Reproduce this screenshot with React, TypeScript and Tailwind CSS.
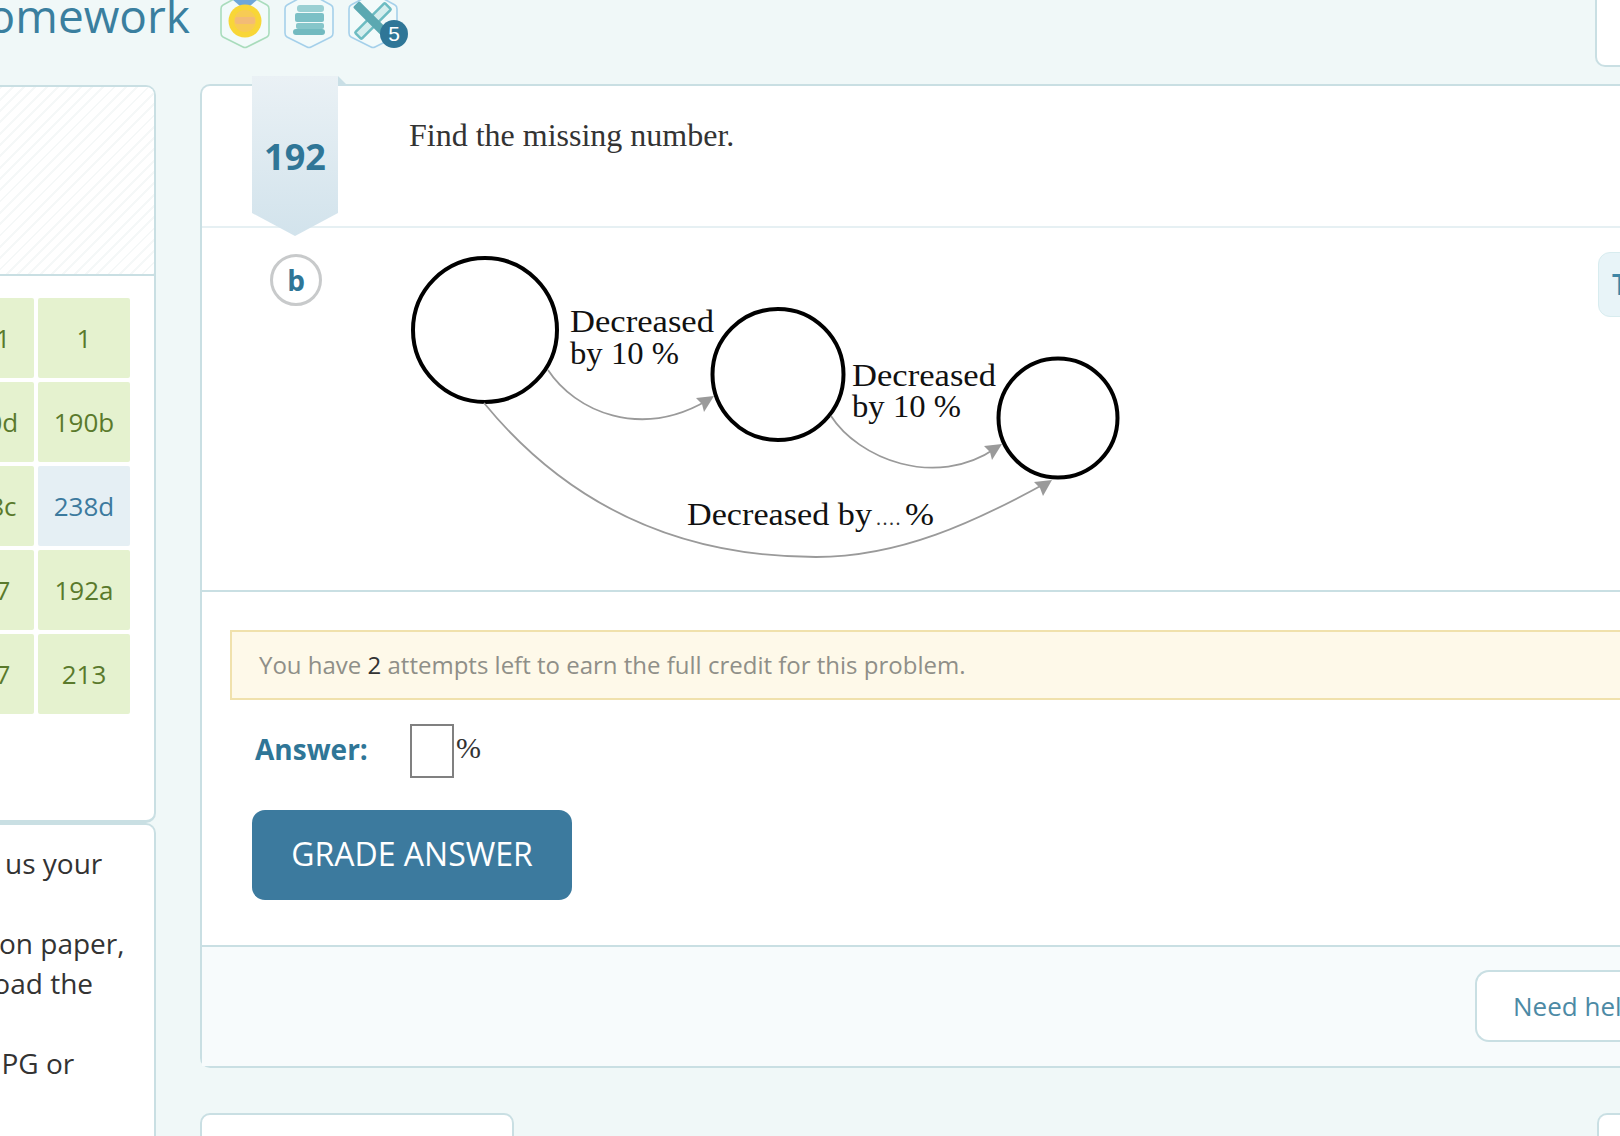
import React from "react";

const Hex = ({ stroke, children }: { stroke: string; children?: React.ReactNode }) => (
  <svg width="50" height="48" viewBox="0 0 50 48" className="overflow-visible shrink-0">
    <path d="M25 -7 L47 5 Q49 6 49 9 L49 33 Q49 36 47 37 L27 47 Q25 48 23 47 L3 37 Q1 36 1 33 L1 9 Q1 6 3 5 Z" fill="#f2fafa" stroke={stroke} strokeWidth="1.6" />
    {children}
  </svg>
);

const Row = ({ a, b, blue }: { a: string; b: string; blue?: boolean }) => (
  <>
    <div className="h-[80px] rounded-[2px] bg-[#e5f2cf] text-[#5a7a2c] flex items-center justify-center">{a}</div>
    <div className={blue ? "h-[80px] rounded-[2px] bg-[#e5eff4] text-[#3c7a9e] flex items-center justify-center" : "h-[80px] rounded-[2px] bg-[#e5f2cf] text-[#5a7a2c] flex items-center justify-center"}>{b}</div>
  </>
);

const Label = ({ x, y, w, children, size = 31 }: { x: number; y: number; w: number; children: string; size?: number }) => (
  <text x={x} y={y} textLength={w} lengthAdjust="spacingAndGlyphs" fontSize={size} fill="#111" fontFamily="'Liberation Serif', serif">{children}</text>
);

export default function App() {
  return (
    <div className="w-[1620px] h-[1136px] overflow-hidden bg-[#f0f8f8] font-['Open_Sans',sans-serif] flex flex-col">
      <header className="h-[85px] shrink-0 flex items-start">
        <div className="w-[190px] h-[85px] overflow-hidden flex justify-end shrink-0">
          <span className="-mt-[8px] text-[46px] leading-[46px] text-[#3a7f9f] whitespace-nowrap">Homework</span>
        </div>
        <div className="ml-[30px] flex gap-[14px]">
          <Hex stroke="#a9dcbc">
            <path d="M6 -6 L20 6 L30 6 L44 -6 Z" fill="#6ea7d8" />
            <circle cx="25" cy="21" r="16.5" fill="#f8d637" />
            <circle cx="25" cy="21" r="11" fill="#f7cb55" />
            <rect x="15" y="17" width="20" height="7" rx="2" fill="#f3bb76" />
          </Hex>
          <Hex stroke="#a5d0ea">
            <rect x="13" y="5" width="27" height="7" rx="3" fill="#9ad0d3" />
            <rect x="11" y="13" width="29" height="9" rx="2" fill="#7cc0c6" />
            <rect x="12" y="23" width="28" height="6" rx="2" fill="#86c6ca" />
            <rect x="9" y="29" width="32" height="6" rx="3" fill="#72bac0" />
          </Hex>
          <div className="relative w-[50px] h-[48px] shrink-0">
            <Hex stroke="#a5d0ea">
              <g transform="rotate(45 25 21)">
                <rect x="20.5" y="0" width="9" height="42" rx="1" fill="#d5eeee" stroke="#6dbcc2" strokeWidth="2.5" />
              </g>
              <g transform="rotate(-45 25 21)">
                <rect x="20.5" y="-3" width="9" height="44" rx="1.5" fill="#5ba8b1" />
              </g>
            </Hex>
            <span className="absolute left-[32px] top-[20px] w-[28px] h-[28px] rounded-full bg-[#2f7697] text-white text-[21px] leading-[28px] text-center font-['Liberation_Sans',sans-serif]">5</span>
          </div>
        </div>
        <div className="ml-auto w-[25px] h-[67px] bg-white border-l-2 border-b-2 border-[#c9dfe3] rounded-bl-[10px]" />
      </header>

      <div className="flex gap-[44px] items-start">
        <aside className="w-[156px] shrink-0 flex flex-col">
          <section className="h-[738px] bg-white border-t-2 border-r-2 border-b-[3px] border-[#c9dfe3] rounded-r-[10px] overflow-hidden">
            <div className="h-[189px] border-b-2 border-[#c9dfe3] bg-[repeating-linear-gradient(135deg,#f5f8f8_0px,#f5f8f8_2px,#ffffff_2px,#ffffff_8px)]" />
            <div className="-ml-[58px] mt-[22px] grid grid-cols-[92px_92px] gap-[4px] text-[26px]">
              <Row a="131" b="1" />
              <Row a="190d" b="190b" />
              <Row a="238c" b="238d" blue />
              <Row a="127" b="192a" />
              <Row a="127" b="213" />
            </div>
          </section>
          <section className="h-[340px] bg-white border-t-2 border-r-2 border-[#c9dfe3] rounded-tr-[10px] pt-[18px] text-[28px] leading-[40px] text-[#333] whitespace-nowrap overflow-hidden">
            <div className="ml-[5px]">us your</div>
            <div className="h-[40px]" />
            <div className="-ml-[1px]">on paper,</div>
            <div className="-ml-[48px]">upload the</div>
            <div className="h-[40px]" />
            <div className="-ml-[6px]">JPG or</div>
          </section>
        </aside>

        <main className="w-[1461px] shrink-0 -mt-[1px]">
          <div className="relative bg-white border-2 border-r-0 border-[#c9dfe3] rounded-l-[10px]">
            <div className="absolute left-[50px] -top-[10px] w-[86px] h-[160px] [clip-path:polygon(0_0,100%_0,100%_137px,50%_100%,0_137px)] bg-[linear-gradient(180deg,#eaf1f5,#d2e3ec)] flex items-center justify-center pt-[1px]">
              <span className="text-[36px] font-bold text-[#2f7697] leading-none">192</span>
            </div>
            <svg className="absolute left-[136px] -top-[10px]" width="11" height="11" viewBox="0 0 11 11">
              <path d="M0 0 L10 10 L0 10 Z" fill="#c9dfe6" />
            </svg>

            <div className="h-[142px] border-b-2 border-[#e6f0f3] pl-[207px] pt-[29px] font-['Liberation_Serif',serif] text-[32px] leading-[40px] text-[#333]">
              Find the missing number.
            </div>

            <div className="flex items-start pl-[68px] border-b-2 border-[#c9dfe3] h-[364px]">
              <div className="mt-[26px] w-[52px] h-[52px] rounded-full border-[3px] border-[#c8cacb] bg-white flex items-center justify-center text-[28px] font-bold text-[#2f7697] leading-none shrink-0">b</div>
              <svg className="ml-[78px] shrink-0 block" width="740" height="360" viewBox="400 228 740 360">
                <circle cx="485" cy="330" r="72" fill="#fff" stroke="#000" strokeWidth="4" />
                <circle cx="778" cy="374.5" r="65.5" fill="#fff" stroke="#000" strokeWidth="4" />
                <circle cx="1058" cy="418" r="59.5" fill="#fff" stroke="#000" strokeWidth="4" />
                <g fill="none" stroke="#9a9a9a" strokeWidth="1.8">
                  <path d="M548 370 C575 411 640 440 708 400" />
                  <path d="M831 416 C858 458 935 490 996 448" />
                  <path d="M484 403 C580 520 700 557 816 557 C900 557 975 522 1046 483" />
                </g>
                <g fill="#9a9a9a">
                  <path d="M714 396 L696 398 L702 404 L704 412 Z" />
                  <path d="M1002 444 L984 446 L990 452 L992 460 Z" />
                  <path d="M1052 480 L1034 482 L1040 488 L1043 496 Z" />
                </g>
                <Label x={570} y={332} w={144}>Decreased</Label>
                <Label x={570} y={364} w={109}>by 10 %</Label>
                <Label x={852} y={386} w={144}>Decreased</Label>
                <Label x={852} y={417} w={109}>by 10 %</Label>
                <Label x={687} y={525} w={185}>Decreased by</Label>
                <text x={876} y={525} fontSize="20" letterSpacing="1.5" fill="#333" fontFamily="'Liberation Serif', serif">....</text>
                <Label x={905} y={525} w={29}>%</Label>
              </svg>
              <div className="ml-auto mt-[24px] w-[63px] h-[65px] rounded-l-[12px] bg-[#e8f4f8] border border-[#d8ecef] pl-[13px] text-[28px] leading-[62px] text-[#3f86a6] font-semibold shrink-0">T</div>
            </div>

            <div className="pt-[38px] pb-[45px]">
              <div className="ml-[28px] h-[70px] bg-[#fef9e9] border-2 border-[#f0e1ac] pl-[27px] flex items-center text-[24px] text-[#8f8f88] whitespace-nowrap">
                <span>You have <span className="text-[#333]">2</span> attempts left to earn the full credit for this problem.</span>
              </div>
              <div className="mt-[24px] flex items-center h-[54px]">
                <span className="ml-[53px] w-[155px] -mt-[4px] text-[28px] font-bold text-[#2f7697]">Answer:</span>
                <div className="w-[44px] h-[54px] border-2 border-[#808080] bg-white" />
                <span className="ml-[2px] -mt-[8px] font-['Liberation_Serif',serif] text-[30px] text-[#333]">%</span>
              </div>
              <button className="mt-[32px] ml-[50px] w-[320px] h-[90px] rounded-[13px] bg-[#3c7a9e] text-white text-[32px] flex items-center justify-center pb-[2px]">GRADE ANSWER</button>
            </div>

            <div className="h-[121px] border-t-2 border-[#c9dfe3] bg-[#f7fbfc] pt-[23px] flex justify-end">
              <div className="w-[186px] h-[72px] bg-white border-2 border-r-0 border-[#c9dfe3] rounded-l-[14px] pl-[36px] text-[26px] leading-[68px] text-[#4c8aa5] whitespace-nowrap overflow-hidden">Need help?</div>
            </div>
          </div>

          <div className="mt-[45px] flex justify-between">
            <div className="w-[314px] h-[60px] bg-white border-2 border-[#c9dfe3] rounded-t-[10px]" />
            <div className="w-[64px] h-[60px] bg-white border-2 border-r-0 border-[#c9dfe3] rounded-tl-[10px]" />
          </div>
        </main>
      </div>
    </div>
  );
}
